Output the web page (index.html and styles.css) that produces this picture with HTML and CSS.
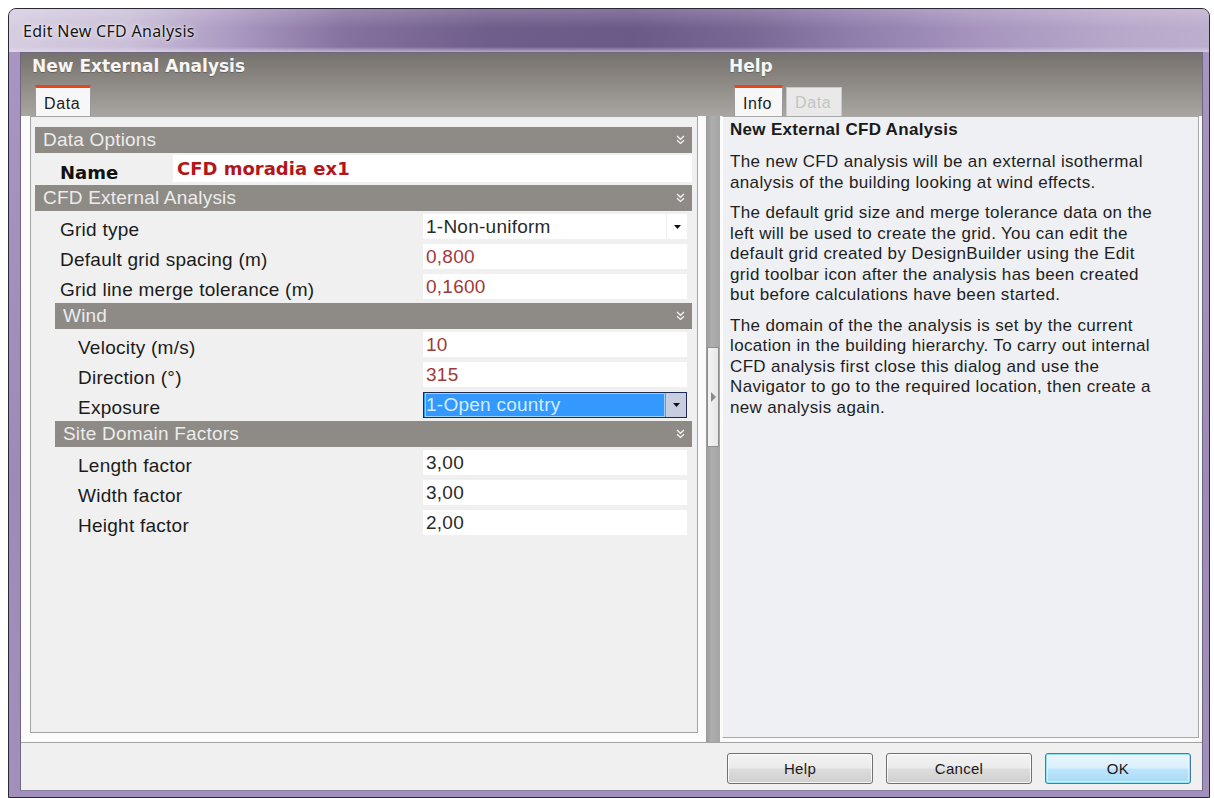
FILE: index.html
```html
<!DOCTYPE html>
<html lang="en">
<head>
<meta charset="utf-8">
<title>Edit New CFD Analysis</title>
<link rel="stylesheet" href="styles.css">
</head>
<body>
<div class="window">
  <div class="titlebar"><span class="title">Edit New CFD Analysis</span></div>
  <div class="frame">
    <div class="client">
      <div class="panes">
        <section class="pane pane-left">
          <header class="pane-head">
            <h1 class="pane-title">New External Analysis</h1>
            <div class="tabs">
              <div class="tab active">Data</div>
            </div>
          </header>
          <div class="pane-body">
            <div class="grid-box">
              <div class="group-head"><span>Data Options</span>
                <svg class="chev" viewBox="0 0 9 10" width="9" height="10"><polyline points="1,1 4.5,4.2 8,1"/><polyline points="1,5.2 4.5,8.4 8,5.2"/></svg>
              </div>
              <div class="row name-row">
                <span class="label name-label">Name</span>
                <span class="name-field">CFD moradia ex1</span>
              </div>

              <div class="group-head"><span>CFD External Analysis</span>
                <svg class="chev" viewBox="0 0 9 10" width="9" height="10"><polyline points="1,1 4.5,4.2 8,1"/><polyline points="1,5.2 4.5,8.4 8,5.2"/></svg>
              </div>
              <div class="row">
                <span class="label">Grid type</span>
                <span class="field combo"><span class="val">1-Non-uniform</span>
                  <span class="drop"><svg viewBox="0 0 7 4" width="7" height="4"><polygon points="0,0 7,0 3.5,4"/></svg></span>
                </span>
              </div>
              <div class="row">
                <span class="label">Default grid spacing (m)</span>
                <span class="field red">0,800</span>
              </div>
              <div class="row">
                <span class="label">Grid line merge tolerance (m)</span>
                <span class="field red">0,1600</span>
              </div>

              <div class="group-head sub"><span>Wind</span>
                <svg class="chev" viewBox="0 0 9 10" width="9" height="10"><polyline points="1,1 4.5,4.2 8,1"/><polyline points="1,5.2 4.5,8.4 8,5.2"/></svg>
              </div>
              <div class="row sub">
                <span class="label">Velocity (m/s)</span>
                <span class="field red">10</span>
              </div>
              <div class="row sub">
                <span class="label">Direction (°)</span>
                <span class="field red">315</span>
              </div>
              <div class="row sub">
                <span class="label">Exposure</span>
                <span class="field combo selected"><span class="val">1-Open country</span>
                  <span class="drop"><svg viewBox="0 0 7 4" width="7" height="4"><polygon points="0,0 7,0 3.5,4"/></svg></span>
                </span>
              </div>

              <div class="group-head sub"><span>Site Domain Factors</span>
                <svg class="chev" viewBox="0 0 9 10" width="9" height="10"><polyline points="1,1 4.5,4.2 8,1"/><polyline points="1,5.2 4.5,8.4 8,5.2"/></svg>
              </div>
              <div class="row sub">
                <span class="label">Length factor</span>
                <span class="field">3,00</span>
              </div>
              <div class="row sub">
                <span class="label">Width factor</span>
                <span class="field">3,00</span>
              </div>
              <div class="row sub">
                <span class="label">Height factor</span>
                <span class="field">2,00</span>
              </div>
            </div>
          </div>
        </section>

        <div class="splitter">
          <div class="grip">
            <svg viewBox="0 0 5 10" width="5" height="10"><polygon points="0,0 5,5 0,10"/></svg>
          </div>
        </div>

        <section class="pane pane-right">
          <header class="pane-head">
            <h2 class="pane-title">Help</h2>
            <div class="tabs">
              <div class="tab active">Info</div>
              <div class="tab disabled">Data</div>
            </div>
          </header>
          <div class="pane-body">
            <div class="help-box">
              <h3 class="help-title">New External CFD Analysis</h3>
              <p>The new CFD analysis will be an external isothermal analysis of the building looking at wind effects.</p>
              <p>The default grid size and merge tolerance data on the left will be used to create the grid. You can edit the default grid created by DesignBuilder using the Edit grid toolbar icon after the analysis has been created but before calculations have been started.</p>
              <p>The domain of the the analysis is set by the current location in the building hierarchy. To carry out internal CFD analysis first close this dialog and use the Navigator to go to the required location, then create a new analysis again.</p>
            </div>
          </div>
        </section>
      </div>

      <footer class="buttons">
        <button class="btn" type="button">Help</button>
        <button class="btn" type="button">Cancel</button>
        <button class="btn default" type="button">OK</button>
      </footer>
    </div>
  </div>
</div>
</body>
</html>
```
FILE: styles.css
```css
* {
  box-sizing: border-box;
}

html, body {
  margin: 0;
  padding: 0;
  background: #ffffff;
  overflow: hidden;
}

body {
  padding: 8px 0 0 8px;
  font-family: "Liberation Sans", Arial, sans-serif;
  color: #1a1a1a;
}

/* ---------- window frame ---------- */
.window {
  width: 1202px;
  height: 790px;
  border: 1px solid #2c2832;
  border-radius: 8px 8px 0 0;
  background: linear-gradient(to bottom, #a996c2 0%, #9d8ab8 60%, #a18fbc 100%);
  display: flex;
  flex-direction: column;
  overflow: hidden;
}

.titlebar {
  height: 43px;
  flex: none;
  padding: 11px 0 0 14px;
  background:
    linear-gradient(to bottom, rgba(255,255,255,0.18) 0%, rgba(255,255,255,0) 45%, rgba(255,255,255,0) 88%, rgba(230,222,238,0.6) 100%),
    linear-gradient(to right, #d6cde0 0%, #cabfd8 10%, #ad9cc4 18%, #85729f 28%, #6f5d8b 40%, #6b5988 52%, #7a6896 62%, #8e7cab 70%, #a593bd 80%, #b7a8ca 92%, #bcaecd 100%);
}

.title {
  font-family: "Noto Sans", "Open Sans", sans-serif;
  font-size: 16px;
  line-height: 22px;
  letter-spacing: 0.3px;
  color: #141414;
  text-shadow: 0 0 6px rgba(255,255,255,0.9), 0 0 2px rgba(255,255,255,0.8);
}

.frame {
  flex: 1;
  padding: 0 6px 6px 11px;
  display: flex;
}

.client {
  flex: 1;
  border: 1px solid #6f6680;
  border-bottom-color: #8a7fa0;
  background: #f0f0f0;
  display: flex;
  flex-direction: column;
}

/* ---------- panes ---------- */
.panes {
  flex: 1;
  display: flex;
  background:
    linear-gradient(to bottom, #76716c 0%, #8c8883 45%, #a9a6a1 100%) top / 100% 63px no-repeat,
    #fafafa;
}

.pane {
  display: flex;
  flex-direction: column;
}

.pane-left {
  width: 685px;
}

.pane-right {
  flex: 1;
}

.pane-head {
  height: 63px;
  flex: none;
  padding-top: 3px;
}

.pane-title {
  margin: 0;
  font-family: "DejaVu Sans", Verdana, sans-serif;
  font-weight: bold;
  font-size: 17px;
  line-height: 20px;
  color: #f6f6f6;
  text-shadow: 0 1px 1px rgba(0,0,0,0.25);
}

.pane-left .pane-title {
  padding-left: 11px;
}

.pane-right .pane-title {
  padding-left: 9px;
}

.tabs {
  display: flex;
  align-items: flex-end;
  margin-top: 9px;
  height: 31px;
}

.pane-left .tabs {
  padding-left: 14px;
}

.pane-right .tabs {
  padding-left: 14px;
  gap: 3px;
}

.tab {
  height: 31px;
  padding: 3px 10px 0 8px;
  font-size: 16px;
  line-height: 25px;
  letter-spacing: 0.6px;
  border: 1px solid #9c9a98;
  border-bottom: none;
  border-top: 3px solid #e5471c;
  background: #f7f7f7;
  color: #1c1c1c;
}

.tab.disabled {
  height: 29px;
  padding-top: 2px;
  border-top: 1px solid #c9c9c9;
  border-color: #c9c9c9;
  background: #e9e9e9;
  color: #c4c4c4;
  line-height: 26px;
}

.pane-body {
  flex: 1;
  display: flex;
}

.pane-left .pane-body {
  padding: 0 8px 9px 9px;
  background: #fbfbfb;
}

.pane-right .pane-body {
  padding: 0 3px 4px 2px;
  background: #fbfbfb;
}

/* ---------- property grid ---------- */
.grid-box {
  flex: 1;
  border: 1px solid #a3a3a3;
  background: #f0f0f0;
  padding: 8px 5px 0 4px;
}

.group-head {
  height: 26px;
  margin-top: 2px;
  display: flex;
  align-items: center;
  justify-content: space-between;
  padding: 0 7px 0 8px;
  background: #8e8a85;
  color: #ececec;
  font-size: 19px;
  letter-spacing: 0.2px;
  line-height: 26px;
}

.group-head.sub {
  margin-left: 20px;
}

.chev {
  flex: none;
  fill: none;
  stroke: #f2f2f2;
  stroke-width: 1.4;
}

.row {
  height: 30px;
  display: flex;
  align-items: flex-start;
  padding: 3px 5px 0 0;
  font-size: 19px;
  letter-spacing: 0.25px;
}

.label {
  flex: 1;
  padding: 3px 0 0 25px;
  line-height: 25px;
  white-space: nowrap;
  color: #1b1b1b;
}

.row.sub .label {
  padding-left: 43px;
}

.field {
  width: 264px;
  height: 25px;
  line-height: 25px;
  padding-left: 3px;
  background: #ffffff;
  color: #2a2a2a;
  white-space: nowrap;
}

.field.red {
  color: #a13a3a;
}

.combo {
  display: flex;
  justify-content: space-between;
}

.combo .drop {
  width: 21px;
  height: 25px;
  display: flex;
  align-items: center;
  justify-content: center;
  border-left: 1px solid #eeeeee;
}

.combo .drop svg {
  fill: #111111;
}

.combo.selected {
  height: 26px;
  line-height: 24px;
  padding-left: 1px;
  border: 1px solid #1f2b4e;
  background: #3399ff;
  color: #d2ecff;
}

.combo.selected .val {
  flex: 1;
  padding-left: 1px;
  box-shadow: inset 0 0 0 1px #9fd0f6;
}

.combo.selected .drop {
  height: 24px;
  background: #c6cee0;
  border-left: 1px solid #7f93bf;
}

/* name row */
.name-row {
  height: 30px;
  padding: 2px 0 0 0;
}

.name-label {
  flex: none;
  width: 138px;
  padding-top: 4px;
  font-family: "DejaVu Sans", Verdana, sans-serif;
  font-weight: bold;
  font-size: 18px;
  letter-spacing: 0;
  line-height: 27px;
  color: #111111;
}

.name-field {
  flex: 1;
  height: 27px;
  padding: 1px 0 0 4px;
  line-height: 25px;
  background: #ffffff;
  font-family: "DejaVu Sans", Verdana, sans-serif;
  font-weight: bold;
  font-size: 18px;
  letter-spacing: 0;
  color: #b3161a;
}

/* ---------- splitter ---------- */
.splitter {
  width: 14px;
  margin-top: 63px;
  background: linear-gradient(to right, #9a9a9a, #aeaeae 40%, #a4a4a4);
  display: flex;
  flex-direction: column;
  align-items: center;
  padding-top: 231px;
}

.grip {
  width: 12px;
  height: 100px;
  background: linear-gradient(to right, #f4f4f4, #e6e6e6);
  border: 1px solid #8e8e8e;
  display: flex;
  align-items: center;
  justify-content: center;
}

.grip svg {
  fill: #8a8a8a;
}

/* ---------- help pane ---------- */
.help-box {
  flex: 1;
  border: 1px solid #a9a9a9;
  border-left-color: #ffffff;
  background: #eef0f4;
  padding: 3px 8px 0 7px;
  font-size: 17px;
  line-height: 20.5px;
  letter-spacing: 0.35px;
  color: #1e1e1e;
}

.help-title {
  margin: 0;
  font-size: 17px;
  font-weight: bold;
  line-height: 20.5px;
  letter-spacing: 0.3px;
  color: #1a1a1a;
}

.help-box p {
  margin: 0;
  margin-top: 10px;
  max-width: 436px;
}

.help-title + p {
  margin-top: 11.5px;
}

/* ---------- dialog buttons ---------- */
.buttons {
  height: 48px;
  flex: none;
  border-top: 1px solid #a2a2a2;
  background: #f0f0f0;
  display: flex;
  justify-content: flex-end;
  align-items: flex-start;
  padding: 10px 11px 0 0;
  gap: 13px;
}

.btn {
  width: 146px;
  height: 31px;
  margin: 0;
  padding: 0;
  border: 1px solid #707070;
  border-radius: 3px;
  background: linear-gradient(to bottom, #f3f3f3 0%, #ebebeb 48%, #dddddd 52%, #cfcfcf 100%);
  box-shadow: inset 0 0 0 1px rgba(255,255,255,0.8);
  font-family: "Liberation Sans", Arial, sans-serif;
  font-size: 15px;
  letter-spacing: 0.3px;
  color: #1a1a1a;
}

.btn.default {
  border-color: #3c7fb1;
  background: linear-gradient(to bottom, #eaf6fd 0%, #d9f0fc 48%, #bee6fd 52%, #a7d9f5 100%);
  box-shadow: inset 0 0 0 1px #8fe1f8, inset 0 0 0 2px rgba(255,255,255,0.5);
}
```
